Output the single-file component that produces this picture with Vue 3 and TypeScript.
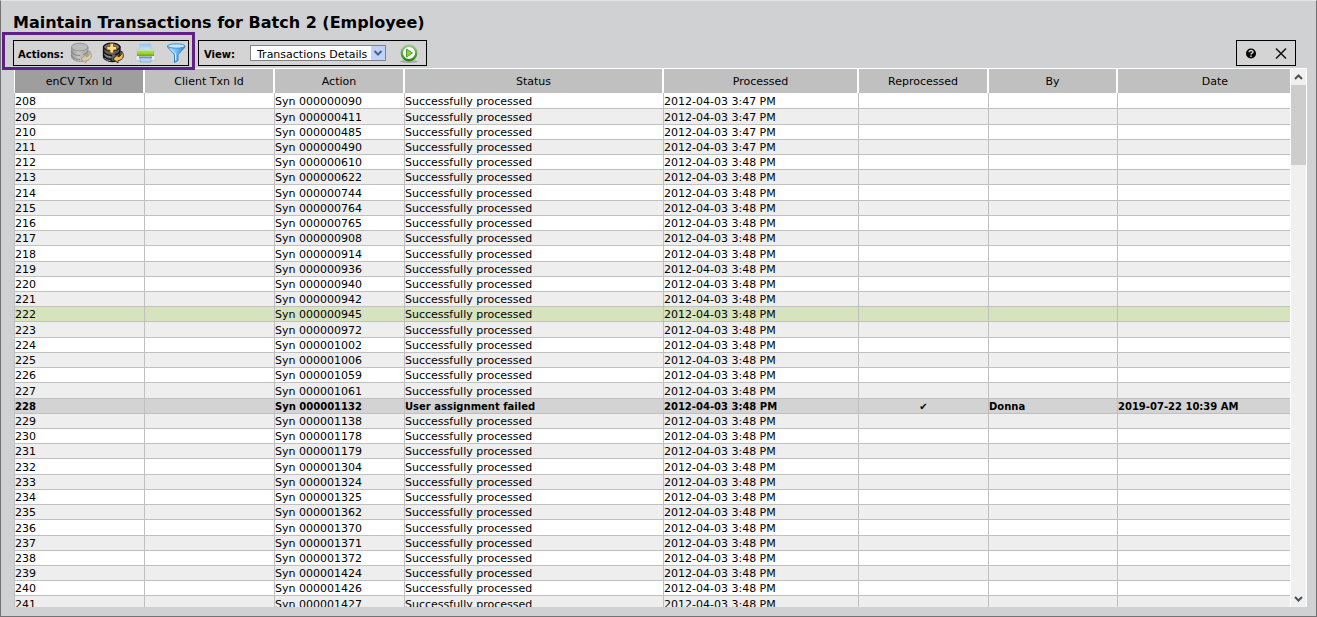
<script setup lang="ts">
import { ref } from 'vue'

interface Txn {
  id: number
  action: string
  status: string
  processed: string
  reprocessed?: boolean
  by?: string
  date?: string
}

const actions: string[] = [
  '000000090', '000000411', '000000485', '000000490', '000000610', '000000622', '000000744',
  '000000764', '000000765', '000000908', '000000914', '000000936', '000000940', '000000942',
  '000000945', '000000972', '000001002', '000001006', '000001059', '000001061', '000001132',
  '000001138', '000001178', '000001179', '000001304', '000001324', '000001325', '000001362',
  '000001370', '000001371', '000001372', '000001424', '000001426', '000001427',
]

const rows: Txn[] = actions.map((code, i) => {
  const id = 208 + i
  const row: Txn = {
    id,
    action: `Syn ${code}`,
    status: 'Successfully processed',
    processed: i < 4 ? '2012-04-03 3:47 PM' : '2012-04-03 3:48 PM',
  }
  return id === 228
    ? { ...row, status: 'User assignment failed', reprocessed: true, by: 'Donna', date: '2019-07-22 10:39 AM' }
    : row
})

const headers: string[] = [
  'enCV Txn Id', 'Client Txn Id', 'Action', 'Status', 'Processed', 'Reprocessed', 'By', 'Date',
]
const view = ref('details')
const active = ref(222)
</script>

<template>
  <main class="window">
    <h1>Maintain Transactions for Batch 2 (Employee)</h1>
    <div class="toolbar">
      <div class="box actions">
        <span class="label">Actions:</span>
        <button type="button" aria-label="Reprocess" disabled>
          <svg width="24" height="24" viewBox="0 0 24 24">
            <defs>
              <linearGradient id="dbGrey" x1="0" x2="1"><stop offset="0" stop-color="#999" /><stop offset=".4" stop-color="#c4c4c4" /><stop offset="1" stop-color="#a6a6a6" /></linearGradient>
            </defs>
            <path d="M2.500 6v9.500c0 2.500 4 5 9 5 4 0 7.500-2 7.500-4V6z" fill="url(#dbGrey)" stroke="#949494" />
            <ellipse cx="10.700" cy="6" rx="8.200" ry="3.800" fill="#bdbdbd" stroke="#969696" />
            <path d="M2.500 10c0 2.500 4 4.500 8.500 4.500M2.500 14c0 2.500 4 4.500 8.500 4.500M19 9.500c0 2-2.500 3.500-5 4.200" fill="none" stroke="#858585" />
            <path d="M20.500 10c3.500 4 2 9-3.500 9.700V22l-5-4 5-4.500v2.300c3-.5 4.200-2.500 3.500-5.800z" fill="#dccba4" stroke="#a1957e" stroke-width=".8" />
          </svg>
        </button>
        <button type="button" aria-label="Reprocess all">
          <svg width="24" height="24" viewBox="0 0 24 24">
            <path d="M2.500 6v9.500c0 2.500 4 5 9 5 4 0 7.500-2 7.500-4V6z" fill="#5d5d5d" stroke="#111" stroke-width="1.300" />
            <ellipse cx="10.700" cy="6" rx="8.200" ry="3.800" fill="#777" stroke="#111" stroke-width="1.300" />
            <path d="M2.500 10c0 2.500 4 4.500 8.500 4.500M2.500 14c0 2.500 4 4.500 8.500 4.500M19 9.500c0 2-2.500 3.500-5 4.200" fill="none" stroke="#111" stroke-width="1.400" />
            <path d="M3.500 13.200c1 1.500 3 2.500 6 3M3.500 17c1 1.500 3 2.300 6 2.700" fill="none" stroke="#b0b0b0" stroke-width=".8" />
            <path d="M9 2.500h3.500v3h3V9h-3v3H9V9H6V5.500h3z" fill="#ffd98a" stroke="#8a5c12" stroke-width=".9" />
            <path d="M20.500 10c3.500 4 2 9-3.500 9.700V22l-5-4 5-4.500v2.300c3-.5 4.200-2.500 3.500-5.800z" fill="#ecc060" stroke="#2c2008" stroke-width=".9" />
          </svg>
        </button>
        <button type="button" aria-label="Print">
          <svg width="24" height="24" viewBox="0 0 24 24">
            <defs>
              <linearGradient id="paper" x2="0" y2="1"><stop offset="0" stop-color="#8fc3ee" /><stop offset="1" stop-color="#d6eaf9" /></linearGradient>
              <linearGradient id="printer" x2="0" y2="1"><stop offset="0" stop-color="#b5dc55" /><stop offset=".5" stop-color="#a0d42c" /><stop offset="1" stop-color="#69a511" /></linearGradient>
            </defs>
            <path d="M7 3h11v7H7z" fill="url(#paper)" stroke="#a8cdea" />
            <path d="M4 8.500h17l1.500 11h-20z" fill="#e8ebeb" stroke="#c3c8c8" stroke-width=".8" />
            <path d="M7 7.500h11v2H7z" fill="#bddcf5" />
            <path d="M4 9.500h17V15H4z" fill="url(#printer)" />
            <path d="M6 15.500h13V17H6z" fill="#718d91" />
            <path d="M7 17h11v4H7z" fill="#b5d6f5" stroke="#7ba9d6" stroke-width=".7" />
          </svg>
        </button>
        <button type="button" aria-label="Filter">
          <svg width="24" height="24" viewBox="0 0 24 24">
            <defs>
              <linearGradient id="funnel" x1="0" x2="1"><stop offset="0" stop-color="#b5e2ff" /><stop offset=".45" stop-color="#7cc4f5" /><stop offset="1" stop-color="#2c83cf" /></linearGradient>
            </defs>
            <path d="M2.500 5c0 2.500 6.500 7 7 9v7.500l3.500-2V14c.5-2 7-6.500 7-9z" fill="url(#funnel)" stroke="#2f7fca" />
            <ellipse cx="11.300" cy="5" rx="8.700" ry="2.200" fill="#c5e6fd" stroke="#3f90dc" />
            <path d="M6 8.500l4.500 4.500v6" fill="none" stroke="#dff3ff" />
          </svg>
        </button>
      </div>
      <div class="box view">
        <label class="label" for="view">View:</label>
        <span class="picker">
          <select id="view" v-model="view">
            <option value="details">Transactions Details</option>
          </select>
          <svg width="14" height="14" viewBox="0 0 14 14" aria-hidden="true">
            <rect width="14" height="14" rx="1" fill="#bed2fb" />
            <path d="M3.500 5l3.500 3.500L10.500 5" fill="none" stroke="#4d6185" stroke-width="2" />
          </svg>
        </span>
        <button type="button" aria-label="Run view">
          <svg width="20" height="20" viewBox="0 0 20 20">
            <defs>
              <linearGradient id="ring" x2="0" y2="1"><stop offset="0" stop-color="#9bc98c" /><stop offset="1" stop-color="#23850d" /></linearGradient>
            </defs>
            <ellipse cx="10" cy="18.500" rx="9" ry="1.500" fill="#a5a5a5" />
            <circle cx="10" cy="10" r="7.200" fill="#fff" stroke="url(#ring)" stroke-width="2.400" />
            <path d="M7.500 6l6 4-6 4z" fill="#8bd03f" stroke="#3f9818" stroke-width=".9" />
          </svg>
        </button>
      </div>
      <div class="box tools">
        <button type="button" aria-label="Help">
          <svg width="12" height="12" viewBox="0 0 12 12">
            <circle cx="6" cy="6.500" r="5" fill="#000" />
            <path d="M4.200 5.200c0-2.300 3.700-2.200 3.700-.2C7.900 6.200 6 6.100 6 7.500M6 8.500V10" fill="none" stroke="#d4d4d4" stroke-width="1.500" />
          </svg>
        </button>
        <button type="button" aria-label="Close">
          <svg width="12" height="12" viewBox="0 0 12 12">
            <path d="M1 1.500l10 10M11 1.500l-10 10" fill="none" stroke="#111" stroke-width="1.500" />
          </svg>
        </button>
      </div>
    </div>

    <div class="panel">
      <div class="list">
        <table>
          <colgroup>
            <col class="c131" /><col class="c130" /><col class="c130" /><col class="c259" />
            <col class="c195" /><col class="c130" /><col class="c129" /><col class="c172" />
          </colgroup>
          <thead>
            <tr>
              <th v-for="(h, i) in headers" :key="h" scope="col" :class="{ sorted: i === 0 }">{{ h }}</th>
            </tr>
          </thead>
          <tbody>
            <tr v-for="r in rows" :key="r.id" :class="{ active: r.id === active, failed: r.reprocessed }">
              <td>{{ r.id }}</td>
              <td></td>
              <td>{{ r.action }}</td>
              <td>{{ r.status }}</td>
              <td>{{ r.processed }}</td>
              <td class="tick">{{ r.reprocessed ? '✔' : '' }}</td>
              <td>{{ r.by }}</td>
              <td>{{ r.date }}</td>
            </tr>
          </tbody>
        </table>
      </div>
      <div class="scroll">
        <button type="button" aria-label="Scroll up">
          <svg width="9" height="6" viewBox="0 0 9 6"><path d="M1 5l3.500-3.500L8 5" fill="none" stroke="#505050" stroke-width="2" /></svg>
        </button>
        <div class="track"><div class="thumb"></div></div>
        <button type="button" aria-label="Scroll down">
          <svg width="9" height="6" viewBox="0 0 9 6"><path d="M1 1l3.500 3.500L8 1" fill="none" stroke="#505050" stroke-width="2" /></svg>
        </button>
      </div>
    </div>
  </main>
</template>

<style>
body {
  margin: 0;
}
</style>

<style scoped>
* {
  box-sizing: border-box;
}
.window {
  display: flex;
  flex-direction: column;
  height: 100vh;
  padding: 12px 9px 9px 13px;
  border: 1px solid #737375;
  border-top-color: #e4e4e5;
  background: #d0d1d3;
  color: #000;
  font: 11px/14px Verdana, "DejaVu Sans", sans-serif;
}
h1 {
  margin: 0 0 0 -1px;
  font-size: 16px;
  line-height: 20px;
  white-space: nowrap;
}
button {
  display: flex;
  align-items: center;
  justify-content: center;
  padding: 0;
  border: 0;
  background: none;
}
.toolbar {
  display: flex;
  gap: 9px;
  margin: 7px 11px 2px -1px;
}
.box {
  position: relative;
  display: flex;
  align-items: center;
  height: 26px;
  border: 1px solid #000;
  background: #d4d4d4;
}
.label {
  padding-top: 4px;
  font-size: 10px;
  font-weight: bold;
}
.actions {
  width: 176px;
  padding-left: 4px;
  gap: 8px;
}
.actions .label {
  width: 43px;
  white-space: nowrap;
}
.actions::after {
  content: "";
  position: absolute;
  inset: -9px -7px -5px -12px;
  border: 3px solid #5f2184;
  pointer-events: none;
  z-index: 1;
}
.view {
  width: 229px;
  padding-left: 5px;
}
.view .label {
  width: 46px;
}
.picker {
  position: relative;
  width: 136px;
  margin-right: 13px;
}
.picker select {
  display: block;
  width: 100%;
  height: 16px;
  padding: 2px 0 0 6px;
  border: 1px solid #7f8389;
  border-radius: 0;
  background: #fff;
  color: #000;
  font: inherit;
  line-height: 14px;
  appearance: none;
}
.picker svg {
  position: absolute;
  top: 1px;
  right: 1px;
}
.tools {
  width: 60px;
  margin-left: auto;
  justify-content: center;
  gap: 18px;
}
.panel {
  flex: 1;
  min-height: 0;
  display: flex;
  padding: 1px 1px 0 0;
  background: #fff;
}
.list {
  flex: 1;
  min-width: 0;
  margin-right: 1px;
  overflow: hidden;
}
table {
  width: 100%;
  table-layout: fixed;
  border-collapse: separate;
  border-spacing: 0;
}
.c131 {
  width: 131px;
}
.c130 {
  width: 130px;
}
.c259 {
  width: 259px;
}
.c195 {
  width: 195px;
}
.c129 {
  width: 129px;
}
.c172 {
  width: 172px;
}
th {
  height: 24px;
  padding: 2px 0 0;
  border-right: 2px solid #fff;
  background: #c0c0c0;
  font-weight: normal;
}
th.sorted {
  border-left: 1px solid #fff;
  background: #9e9e9e;
}
th:last-child {
  padding-left: 22px;
}
th:last-child,
td:last-child {
  border-right: 0;
}
td {
  height: 15px;
  padding: 1px 0 0;
  border-right: 1px solid #c0c0c0;
  border-bottom: 1px solid #c0c0c0;
  line-height: 13px;
  white-space: nowrap;
}
td:first-child {
  border-left: 1px solid #c0c0c0;
}
tr:first-child td,
tr:nth-child(9n + 2) td,
tr:nth-child(9n + 7) td {
  height: 16px;
}
tbody tr:nth-child(even) {
  background: #eee;
}
tbody tr.active {
  background: #d6e3bc;
}
tbody tr.failed {
  background: #d3d3d3;
  font-size: 10px;
  font-weight: bold;
}
.tick {
  text-align: center;
}
.scroll {
  display: flex;
  flex-direction: column;
  width: 15px;
  background: #f0f0f0;
}
.scroll button {
  height: 16px;
}
.track {
  flex: 1;
}
.thumb {
  height: 15%;
  min-height: 80px;
  background: #cdcdcd;
}
</style>
